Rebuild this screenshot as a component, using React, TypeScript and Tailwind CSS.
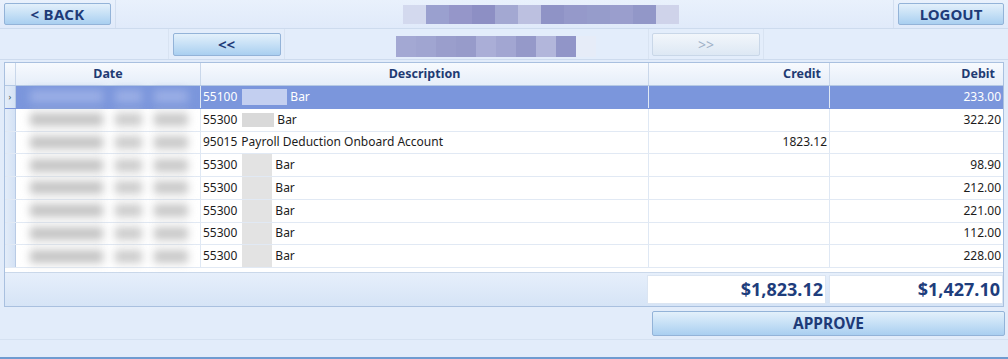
import React from 'react';

type Row = { code: string; mask: number; text: string; credit: string; debit: string };

const rows: Row[] = [
  { code: '55100', mask: 45, text: 'Bar', credit: '', debit: '233.00' },
  { code: '55300', mask: 32, text: 'Bar', credit: '', debit: '322.20' },
  { code: '95015', mask: 0, text: 'Payroll Deduction Onboard Account', credit: '1823.12', debit: '' },
  { code: '55300', mask: 30, text: 'Bar', credit: '', debit: '98.90' },
  { code: '55300', mask: 30, text: 'Bar', credit: '', debit: '212.00' },
  { code: '55300', mask: 30, text: 'Bar', credit: '', debit: '221.00' },
  { code: '55300', mask: 30, text: 'Bar', credit: '', debit: '112.00' },
  { code: '55300', mask: 30, text: 'Bar', credit: '', debit: '228.00' },
];

const titleBlocks = ['#d3d9ee', '#9aa0cf', '#9596c9', '#8d8fc4', '#a3a8d2', '#bcc0e0', '#8f93c6', '#9599ca', '#969ccb', '#9a9ecd', '#9297c8', '#cfd3ea'];
const subBlocks = ['#a3a8d3', '#a0a5d1', '#9a9ecc', '#979bca', '#aaaed7', '#a2a6d2', '#9599c9', '#b2b6db', '#9195c8', '#e6ecf8'];

const Btn: React.FC<{ label: string; className?: string; disabled?: boolean }> = ({ label, className = '', disabled }) => (
  <div
    className={`flex items-center justify-center rounded-[2px] border font-bold ${
      disabled
        ? 'border-[#c9d7e8] bg-gradient-to-b from-[#f2f6fb] to-[#dde8f4] text-[#9fb1c7]'
        : 'border-[#93b3d8] bg-gradient-to-b from-[#e3f0fb] via-[#c6e0f6] to-[#a9cff0] text-[#1e3b78]'
    } ${className}`}
  >
    {label}
  </div>
);

const App: React.FC = () => {
  return (
    <div
      className="flex h-[359px] w-[1008px] flex-col overflow-hidden bg-[#e2ecfa] text-[#222]"
      style={{ fontFamily: '"Noto Sans", "DejaVu Sans", sans-serif' }}
    >
      {/* top bar */}
      <div className="flex h-[29px] border-b border-[#cddbee] bg-gradient-to-b from-[#e9f1fc] to-[#e0eafa]">
        <div className="flex w-[116px] items-center border-r border-[#d3dff0] pl-[4px]">
          <Btn label="< BACK" className="h-[22px] w-[107px] text-[15px] tracking-[0.3px]" />
        </div>
        <div className="flex flex-1 items-center pl-[287px]">
          <div className="flex h-[19px]">
            {titleBlocks.map((c, i) => (
              <div key={i} className="h-full w-[23px]" style={{ background: c }} />
            ))}
          </div>
        </div>
        <div className="flex w-[115px] items-center border-l border-[#d3dff0] pl-[4px]">
          <Btn label="LOGOUT" className="h-[22px] w-[106px] text-[15px]" />
        </div>
      </div>

      {/* pager row */}
      <div className="flex h-[31px] border-b border-[#cddbee] bg-[#e3edfb]">
        <div className="w-[169px] border-r border-[#d8e3f2]" />
        <div className="flex w-[116px] items-center justify-center border-r border-[#d8e3f2]">
          <Btn label="<<" className="h-[23px] w-[108px] text-[15px]" />
        </div>
        <div className="flex flex-1 items-end pb-[2px] pl-[111px]">
          <div className="flex h-[21px]">
            {subBlocks.map((c, i) => (
              <div key={i} className="h-full w-[20px]" style={{ background: c }} />
            ))}
          </div>
        </div>
        <div className="flex w-[116px] items-center justify-center border-l border-r border-[#d8e3f2]">
          <Btn label=">>" disabled className="h-[23px] w-[108px] text-[14px] font-normal" />
        </div>
        <div className="w-[244px]" />
      </div>

      {/* grid */}
      <div className="mx-[4px] mt-[2px] flex flex-col border border-[#a9c0df] bg-white">
        <div className="flex h-[23px] border-b border-[#b5c9e4] bg-gradient-to-b from-[#f7fafe] to-[#e6eef9] text-[12.5px] font-bold text-[#1f3b73]">
          <div className="w-[11px] border-r border-[#c9d7ea]" />
          <div className="flex w-[185px] items-center justify-center border-r border-[#c9d7ea]">Date</div>
          <div className="flex w-[448px] items-center justify-center border-r border-[#c9d7ea]">Description</div>
          <div className="flex w-[181px] items-center justify-end border-r border-[#c9d7ea] pr-[8px]">Credit</div>
          <div className="flex flex-1 items-center justify-end pr-[8px]">Debit</div>
        </div>
        {rows.map((r, i) => {
          const sel = i === 0;
          return (
            <div
              key={i}
              className={`flex h-[22.75px] border-b text-[12px] ${
                sel ? 'border-[#7b96dc] bg-[#7b96dc] text-white' : 'border-[#e1e9f4] bg-white text-[#1c1c1c]'
              }`}
            >
              <div className="flex w-[11px] items-center justify-center border-r border-[#b9cbe5] bg-gradient-to-r from-[#e4edf9] to-[#d4e2f5] text-[9px] text-[#355]">
                {sel ? '›' : ''}
              </div>
              <div className="flex w-[185px] items-center border-r border-[#dfe8f4] pl-[14px]">
                <div className="flex h-[13px] w-[158px] gap-[12px] blur-[4px]">
                  <div className={`h-full w-[76px] ${sel ? 'bg-[#9aaee5]' : 'bg-[#c4c4c4]'}`} />
                  <div className={`h-full w-[28px] ${sel ? 'bg-[#9aaee5]' : 'bg-[#cccccc]'}`} />
                  <div className={`h-full w-[36px] ${sel ? 'bg-[#9aaee5]' : 'bg-[#c8c8c8]'}`} />
                </div>
              </div>
              <div className="flex w-[448px] items-center border-r border-[#dfe8f4] pl-[2px]">
                <span>{r.code}</span>
                {r.mask > 0 ? (
                  <>
                    <div
                      className={`ml-[5px] mr-[3px] ${sel ? 'h-[16px] bg-[#c3cff0]' : i === 1 ? 'h-[14px] bg-[#d9d9d9]' : 'h-full bg-[#e3e3e3]'}`}
                      style={{ width: r.mask }}
                    />
                    <span>{r.text}</span>
                  </>
                ) : (
                  <span className="ml-[4px]">{r.text}</span>
                )}
              </div>
              <div className="flex w-[181px] items-center justify-end border-r border-[#dfe8f4] pr-[2px]">{r.credit}</div>
              <div className="flex flex-1 items-center justify-end pr-[2px]">{r.debit}</div>
            </div>
          );
        })}
        <div className="h-[5px] border-b border-[#cad8ea] bg-white" />
        <div className="flex h-[33px] bg-gradient-to-b from-[#e6effb] to-[#d6e4f6] py-[2px] text-[18px] font-bold text-[#1e3d7c]">
          <div className="flex-1" />
          <div className="flex w-[179px] items-center justify-end border border-[#dbe5f2] bg-white pr-[2px]">$1,823.12</div>
          <div className="ml-[3px] flex w-[174px] items-center justify-end border border-[#dbe5f2] bg-white pr-[2px]">$1,427.10</div>
        </div>
      </div>

      {/* approve */}
      <div className="flex h-[33px] border-b border-[#d5e1f1] pt-[4px]">
        <div className="flex-1" />
        <Btn label="APPROVE" className="mr-[3px] h-[25px] w-[353px] text-[15.5px]" />
      </div>
      <div className="flex-1 border-b-[2px] border-[#6f9bd0] bg-[#e2ecfa]" />
    </div>
  );
};

export default App;
